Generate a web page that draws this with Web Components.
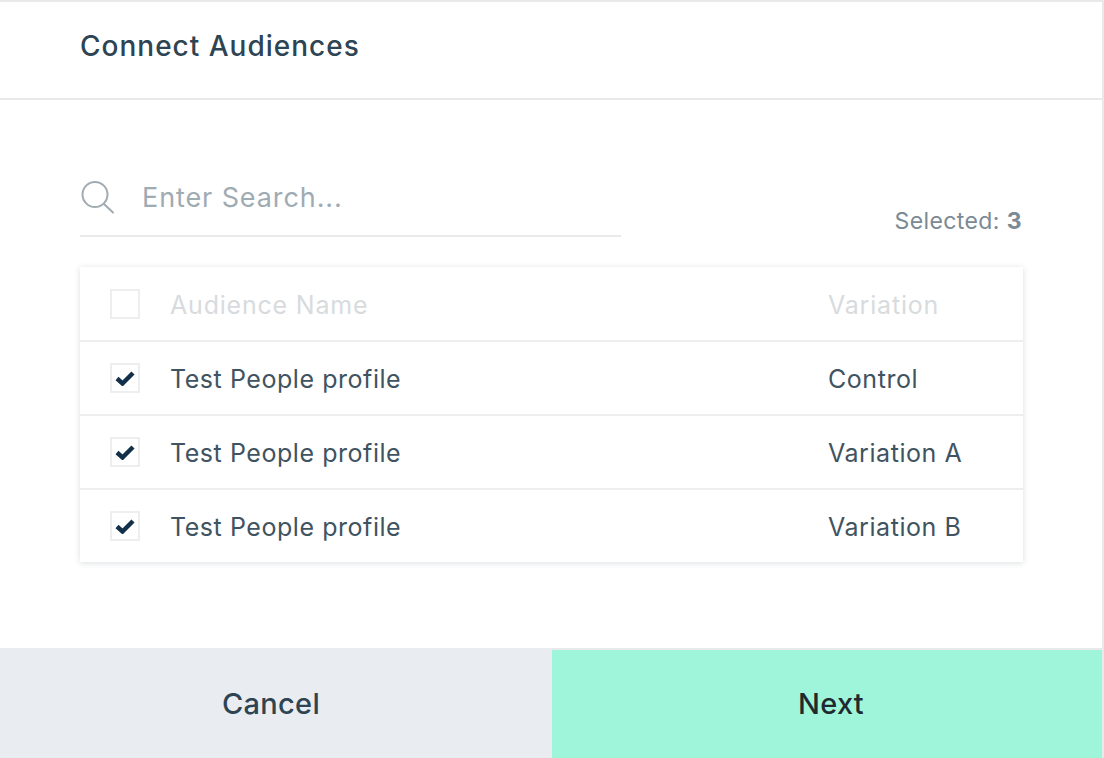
<!DOCTYPE html>
<html>
<head>
<meta charset="utf-8">
<title>Connect Audiences</title>
<style>
html, body { margin: 0; height: 100%; background: #fff; }
body { font-family: Inter, "Liberation Sans", sans-serif; overflow: hidden; }
</style>
</head>
<body>
<connect-dialog>
    <span slot="title">Connect Audiences</span>
    <search-box slot="search" placeholder="Enter Search..."></search-box>
    <span slot="count">Selected: <b>3</b></span>
    <audience-table slot="table">
        <audience-row header name="Audience Name" variation="Variation"></audience-row>
        <audience-row checked name="Test People profile" variation="Control"></audience-row>
        <audience-row checked name="Test People profile" variation="Variation A"></audience-row>
        <audience-row checked name="Test People profile" variation="Variation B"></audience-row>
    </audience-table>
    <span slot="cancel">Cancel</span>
    <span slot="next">Next</span>
</connect-dialog>

<script>
const dialogTemplate = document.createElement('template');
dialogTemplate.innerHTML = `
<style>
:host {
    display: flex;
    flex-direction: column;
    box-sizing: border-box;
    width: 1104px;
    height: 758px;
    background: #fff;
    border-top: 2px solid #e8e9ea;
    border-right: 2px solid #e8e9ea;
    color: #2e4453;
}
header {
    height: 98px;
    box-sizing: border-box;
    border-bottom: 2px solid #e8e9ea;
    padding: 26px 80px 0;
    font-size: 28px;
    font-weight: 500;
    letter-spacing: 1px;
    line-height: 36px;
    color: #2e4453;
}
main {
    flex: 1;
    padding: 0 80px;
}
.tools {
    display: flex;
    justify-content: space-between;
    align-items: flex-end;
    height: 137px;
    margin-bottom: 30px;
}
.count {
    font-size: 23px;
    letter-spacing: 0.4px;
    line-height: 30px;
    color: #7b8a94;
    padding-bottom: 1px;
}
footer {
    display: grid;
    grid-template-columns: 552px 1fr;
    height: 110px;
    font-size: 29px;
    font-weight: 500;
    letter-spacing: 0.3px;
    text-align: center;
    line-height: 112px;
}
.cancel { background: #e9edf1; color: #2e4453; padding-right: 10px; }
.next { background: #9ff5da; color: #1f2a30; padding-left: 8px; border-top: 2px solid #e8e9ea; line-height: 108px; }
</style>
<header><slot name="title"></slot></header>
<main>
    <div class="tools">
        <slot name="search"></slot>
        <div class="count"><slot name="count"></slot></div>
    </div>
    <slot name="table"></slot>
</main>
<footer>
    <div class="cancel"><slot name="cancel"></slot></div>
    <div class="next"><slot name="next"></slot></div>
</footer>
`;
class ConnectDialog extends HTMLElement {
    constructor() {
        super();
        this.attachShadow({mode: 'open'});
        this.shadowRoot.appendChild(dialogTemplate.content.cloneNode(true));
    }
}
customElements.define('connect-dialog', ConnectDialog);

const searchTemplate = document.createElement('template');
searchTemplate.innerHTML = `
<style>
:host {
    display: flex;
    align-items: center;
    gap: 26px;
    box-sizing: border-box;
    width: 541px;
    height: 76px;
    border-bottom: 2px solid #e8eaec;
    font-size: 27px;
    letter-spacing: 0.9px;
    color: #9fabb3;
}
svg { display: block; flex: none; margin-bottom: 4px; }
span { margin-bottom: 2px; }
</style>
<svg width="36" height="36" viewBox="0 0 36 36" fill="none" stroke="#a0abb2" stroke-width="2">
    <circle cx="15" cy="16.5" r="12.5"/>
    <path d="M24 26L33 34.5" stroke-linecap="round"/>
</svg>
<span></span>
`;
class SearchBox extends HTMLElement {
    constructor() {
        super();
        this.attachShadow({mode: 'open'});
        this.shadowRoot.appendChild(searchTemplate.content.cloneNode(true));
        this.shadowRoot.querySelector('span').innerText = this.getAttribute('placeholder');
    }
}
customElements.define('search-box', SearchBox);

const tableTemplate = document.createElement('template');
tableTemplate.innerHTML = `
<style>
:host {
    display: block;
    width: 943px;
    background: #fff;
    box-shadow: 0 1px 6px rgba(40, 50, 60, 0.16);
}
</style>
<slot></slot>
`;
class AudienceTable extends HTMLElement {
    constructor() {
        super();
        this.attachShadow({mode: 'open'});
        this.shadowRoot.appendChild(tableTemplate.content.cloneNode(true));
    }
}
customElements.define('audience-table', AudienceTable);

const rowTemplate = document.createElement('template');
rowTemplate.innerHTML = `
<style>
:host {
    display: grid;
    grid-template-columns: 60px 1fr 195px;
    align-items: center;
    box-sizing: border-box;
    height: 74px;
    padding-left: 30px;
    border-bottom: 2px solid #eceef0;
    font-size: 25px;
    letter-spacing: 0.55px;
    color: #3f5361;
}
:host(:first-child) { height: 75px; }
:host(:last-child) { border-bottom: 0; height: 72px; }
:host([header]) { color: #d8dbde; letter-spacing: 0.8px; }
.name, .variation { padding-top: 2px; }
.box {
    box-sizing: border-box;
    width: 30px;
    height: 30px;
    border: 2px solid #eceef0;
    display: flex;
    align-items: center;
    justify-content: center;
}
svg { display: none; }
:host([checked]) svg { display: block; }
</style>
<div class="box">
    <svg width="20" height="16" viewBox="0 0 20 16"><path d="M2 8.5L7.5 13.5L18 3" fill="none" stroke="#12304a" stroke-width="4.4"/></svg>
</div>
<div class="name"></div>
<div class="variation"></div>
`;
class AudienceRow extends HTMLElement {
    constructor() {
        super();
        this.attachShadow({mode: 'open'});
        this.shadowRoot.appendChild(rowTemplate.content.cloneNode(true));
        this.shadowRoot.querySelector('.name').innerText = this.getAttribute('name');
        this.shadowRoot.querySelector('.variation').innerText = this.getAttribute('variation');
    }
}
customElements.define('audience-row', AudienceRow);
</script>
</body>
</html>
